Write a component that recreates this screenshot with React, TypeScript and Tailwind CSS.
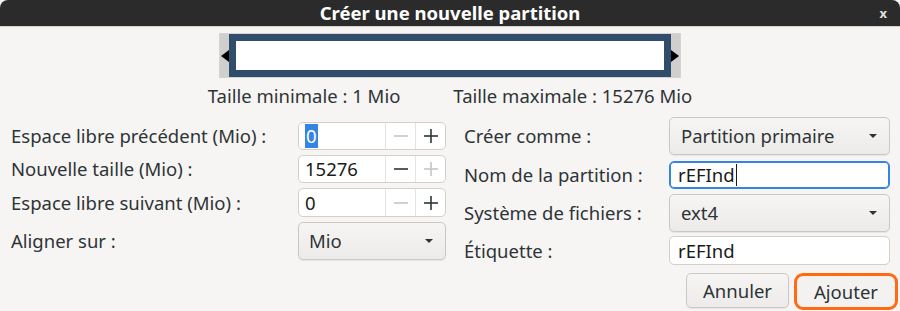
import React from "react";

const font = { fontFamily: '"Noto Sans", "Open Sans", sans-serif' };

function Minus({ enabled }: { enabled: boolean }) {
  return (
    <svg width="16" height="16" viewBox="0 0 16 16">
      <line x1="1" y1="8" x2="15" y2="8" stroke={enabled ? "#2e3436" : "#c8c6c3"} strokeWidth="1.6" />
    </svg>
  );
}
function Plus({ enabled }: { enabled: boolean }) {
  return (
    <svg width="16" height="16" viewBox="0 0 16 16">
      <line x1="1" y1="8" x2="15" y2="8" stroke={enabled ? "#2e3436" : "#c8c6c3"} strokeWidth="1.6" />
      <line x1="8" y1="1" x2="8" y2="15" stroke={enabled ? "#2e3436" : "#c8c6c3"} strokeWidth="1.6" />
    </svg>
  );
}

function Spin({ value, minus, plus, selected, h = "h-[28px]" }: { value: string; minus: boolean; plus: boolean; selected?: boolean; h?: string }) {
  return (
    <div className={`flex ${h} w-[148px] rounded-[5px] border border-[#d3cfcb] bg-white`}>
      <div className="flex flex-1 items-center pl-[6px] text-[18.5px] leading-[24px] text-[#1a1a1a]">
        {selected ? <span className="bg-[#3584e4] px-[1px] leading-[24px] text-white">{value}</span> : value}
      </div>
      <div className="flex w-[30px] items-center justify-center border-l border-[#e6e3e0]">
        <Minus enabled={minus} />
      </div>
      <div className="flex w-[30px] items-center justify-center border-l border-[#e6e3e0]">
        <Plus enabled={plus} />
      </div>
    </div>
  );
}

function Arrow() {
  return (
    <svg width="10" height="6" viewBox="0 0 10 6">
      <path d="M1 1 L9 1 L5 5 Z" fill="#2e3436" />
    </svg>
  );
}

function Combo({ value, w, pl }: { value: string; w: string; pl: string }) {
  return (
    <div className={`flex h-[38px] ${w} items-center justify-between rounded-[5px] border border-[#cdc7c2] bg-gradient-to-b from-[#f6f5f4] to-[#edebe9] ${pl} pr-[11px] text-[18.5px] leading-[24px] text-[#2e3436] shadow-[0_1px_1px_rgba(0,0,0,0.07)]`}>
      <span>{value}</span>
      <Arrow />
    </div>
  );
}

function Entry({ value, focused, h }: { value: string; focused?: boolean; h: string }) {
  return (
    <div className={`flex ${h} w-[221px] items-center rounded-[5px] border ${focused ? "border-[#3584e4] shadow-[inset_0_0_0_1px_#3584e4]" : "border-[#d3cfcb]"} bg-white pl-[8px] text-[18.5px] leading-[24px] text-[#1a1a1a]`}>
      <span>{value}</span>
      {focused && <span className="ml-[1px] inline-block h-[22px] w-[1.5px] bg-[#1a1a1a]" />}
    </div>
  );
}

const label = "text-[18.5px] leading-[24px] text-[#2e3436]";

export default function App() {
  return (
    <div className="h-[311px] w-[900px] overflow-hidden bg-[#f6f5f4]" style={font}>
      <div className="relative flex h-[26px] items-center justify-center rounded-t-[8px] bg-[#2b2b2b]">
        <span className="text-[18.5px] font-bold leading-[24px] text-white">Créer une nouvelle partition</span>
        <span className="absolute right-[13px] top-[4px] text-[13px] font-bold text-[#e0e0e0]">x</span>
      </div>
      <div className="h-[1px] bg-[#d8d4d0]" />
      <div className="flex justify-center pt-[6px]">
        <div className="relative flex h-[45px] w-[462px] items-center justify-center border border-[#d6d3d0] bg-[#cfcfcf]">
          <div className="h-[43px] w-[442px] bg-[#314d6c] p-[7px]">
            <div className="h-full w-full bg-white" />
          </div>
          <svg className="absolute left-[1px] top-[16px]" width="8" height="12" viewBox="0 0 8 12">
            <path d="M8 0 L0 6 L8 12 Z" fill="#000" />
          </svg>
          <svg className="absolute right-[1px] top-[16px]" width="8" height="12" viewBox="0 0 8 12">
            <path d="M0 0 L8 6 L0 12 Z" fill="#000" />
          </svg>
        </div>
      </div>
      <div className={`mt-[7px] flex h-[22px] items-center justify-center gap-[53px] ${label}`}>
        <span>Taille minimale : 1 Mio</span>
        <span>Taille maximale : 15276 Mio</span>
      </div>
      <div className="mt-[10px] flex pl-[11px]">
        <div className="flex flex-col pt-[5px]">
          <div className="flex items-center">
            <span className={`w-[287px] ${label}`}>Espace libre précédent (Mio) :</span>
            <Spin value="0" minus={false} plus={true} selected />
          </div>
          <div className="mt-[5px] flex items-center">
            <span className={`w-[287px] ${label}`}>Nouvelle taille (Mio) :</span>
            <Spin value="15276" minus={true} plus={false} />
          </div>
          <div className="mt-[5px] flex items-center">
            <span className={`w-[287px] ${label}`}>Espace libre suivant (Mio) :</span>
            <Spin value="0" minus={false} plus={true} h="h-[29px]" />
          </div>
          <div className="mt-[5px] flex items-center">
            <span className={`w-[287px] ${label}`}>Aligner sur :</span>
            <Combo value="Mio" w="w-[148px]" pl="pl-[10px]" />
          </div>
        </div>
        <div className="ml-[18px] flex flex-col">
          <div className="flex items-center">
            <span className={`w-[205px] ${label}`}>Créer comme :</span>
            <Combo value="Partition primaire" w="w-[221px]" pl="pl-[11px]" />
          </div>
          <div className="mt-[6px] flex items-center">
            <span className={`w-[205px] ${label}`}>Nom de la partition :</span>
            <Entry value="rEFInd" focused h="h-[28px]" />
          </div>
          <div className="mt-[5px] flex items-center">
            <span className={`w-[205px] ${label}`}>Système de fichiers :</span>
            <Combo value="ext4" w="w-[221px]" pl="pl-[11px]" />
          </div>
          <div className="mt-[4px] flex items-center">
            <span className={`w-[205px] ${label}`}>Étiquette :</span>
            <Entry value="rEFInd" h="h-[29px]" />
          </div>
        </div>
      </div>
      <div className="mt-[8px] flex items-start justify-end gap-[5px] pr-[2px]">
        <div className="flex h-[35px] w-[103px] items-center justify-center rounded-[5px] border border-[#cdc7c2] bg-gradient-to-b from-[#f6f5f4] to-[#edebe9] text-[18.5px] leading-[24px] text-[#2e3436] shadow-[0_1px_1px_rgba(0,0,0,0.07)]">
          Annuler
        </div>
        <div className="flex h-[37px] w-[104px] items-center justify-center rounded-[9px] border-[3px] border-[#ff6a13] bg-[#f3f2f1] text-[18.5px] leading-[24px] text-[#2e3436]">
          Ajouter
        </div>
      </div>
    </div>
  );
}
